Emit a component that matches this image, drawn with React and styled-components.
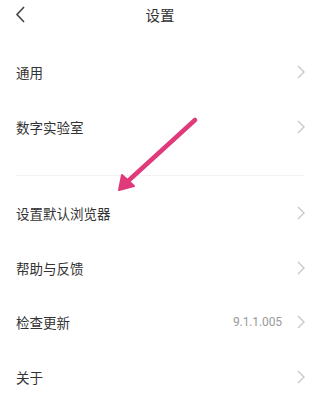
import React from "react";
import styled, { createGlobalStyle } from "styled-components";

const GlobalStyle = createGlobalStyle`
  html, body {
    margin: 0;
    padding: 0;
    background: #fff;
  }
  body {
    font-family: "Noto Sans CJK SC", "Noto Sans", sans-serif;
    color: #333;
  }
`;

const Page = styled.div`
  position: relative;
  width: 320px;
  height: 401px;
  overflow: hidden;
  background: #fff;
`;

const Header = styled.div`
  display: flex;
  align-items: center;
  justify-content: center;
  position: relative;
  height: 28px;
`;

const BackButton = styled.span`
  position: absolute;
  left: 14px;
  top: 6px;
  display: flex;
`;

const Title = styled.div`
  font-size: 14.5px;
  color: #333;
`;

const Group = styled.div`
  display: flex;
  flex-direction: column;
  padding-top: ${(p) => p.$top || 0}px;
`;

const Row = styled.div`
  display: flex;
  align-items: center;
  height: 54.5px;
  padding: 0 15px 0 16px;
`;

const Label = styled.span`
  flex: 1;
  font-size: 13.5px;
  color: #333;
`;

const Value = styled.span`
  font-family: "Roboto", "Noto Sans", sans-serif;
  font-size: 12px;
  letter-spacing: -0.1px;
  color: #9a9a9a;
  margin-right: 15px;
`;

const Divider = styled.div`
  height: 1px;
  margin: 21px 16px 10px;
  background: #f2f2f2;
`;

const Arrow = styled.svg`
  position: absolute;
  left: 0;
  top: 0;
  pointer-events: none;
`;

const Chevron = () => (
  <svg width="8" height="14" viewBox="0 0 8 14">
    <path d="M1 1 L7 7 L1 13" fill="none" stroke="#c6c6c6" strokeWidth="1.3" />
  </svg>
);

const items1 = [{ label: "通用" }, { label: "数字实验室" }];
const items2 = [
  { label: "设置默认浏览器" },
  { label: "帮助与反馈" },
  { label: "检查更新", value: "9.1.1.005" },
  { label: "关于" },
];

const SettingRow = ({ label, value }) => (
  <Row>
    <Label>{label}</Label>
    {value && <Value>{value}</Value>}
    <Chevron />
  </Row>
);

export default function App() {
  return (
    <Page>
      <GlobalStyle />
      <Header>
        <BackButton>
          <svg width="12" height="17" viewBox="0 0 12 17">
            <path d="M10 1 L3 8.5 L10 16" fill="none" stroke="#444" strokeWidth="1.6" />
          </svg>
        </BackButton>
        <Title>设置</Title>
      </Header>
      <Group $top={17}>
        {items1.map((it) => (
          <SettingRow key={it.label} {...it} />
        ))}
      </Group>
      <Divider />
      <Group>
        {items2.map((it) => (
          <SettingRow key={it.label} {...it} />
        ))}
      </Group>
      <Arrow width="320" height="401" viewBox="0 0 320 401">
        <line x1="195" y1="120" x2="127" y2="182" stroke="#e03a7a" strokeWidth="4.5" strokeLinecap="round" />
        <polygon points="119,190 122,175 134,186" fill="#e03a7a" stroke="#e03a7a" strokeWidth="2" strokeLinejoin="round" />
      </Arrow>
    </Page>
  );
}
